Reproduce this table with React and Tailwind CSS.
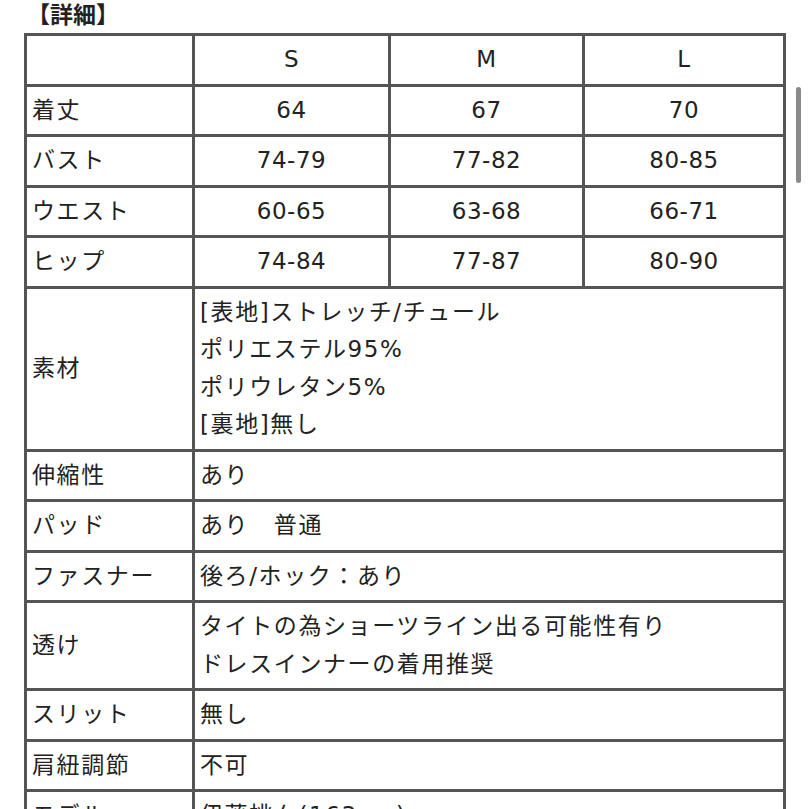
import React from 'react';

const sizes = [
  { label: '着丈', s: '64', m: '67', l: '70' },
  { label: 'バスト', s: '74-79', m: '77-82', l: '80-85' },
  { label: 'ウエスト', s: '60-65', m: '63-68', l: '66-71' },
  { label: 'ヒップ', s: '74-84', m: '77-87', l: '80-90' },
];

const details = [
  { label: '素材', lines: ['[表地]ストレッチ/チュール', 'ポリエステル95%', 'ポリウレタン5%', '[裏地]無し'] },
  { label: '伸縮性', lines: ['あり'] },
  { label: 'パッド', lines: ['あり　普通'] },
  { label: 'ファスナー', lines: ['後ろ/ホック：あり'] },
  { label: '透け', lines: ['タイトの為ショーツライン出る可能性有り', 'ドレスインナーの着用推奨'] },
  { label: 'スリット', lines: ['無し'] },
  { label: '肩紐調節', lines: ['不可'] },
  { label: 'モデル', lines: ['伊藤桃々(163cm)'] },
];

const cell = 'border-[3px] border-[#555] px-[5px] py-[5px] leading-[37.5px] align-middle';
const num = `${cell} text-center tracking-[0.5px]`;

export default function App() {
  return (
    <div
      className="relative h-[809px] w-[809px] overflow-hidden bg-white text-[#222] text-[23px] tracking-[1.6px]"
      style={{ fontFamily: '"DejaVu Sans", "Noto Sans CJK JP", sans-serif' }}
    >
      <div className="h-[33px] pl-[27px] text-[23px] font-bold leading-[30px] tracking-normal">【詳細】</div>

      <table className="ml-[24px] w-[762px] table-fixed border-collapse">
        <colgroup>
          <col className="w-[168px]" />
          <col className="w-[196px]" />
          <col className="w-[194px]" />
          <col className="w-[201px]" />
        </colgroup>
        <tbody>
          <tr>
            <td className={cell}></td>
            <td className={num}>S</td>
            <td className={num}>M</td>
            <td className={num}>L</td>
          </tr>
          {sizes.map((r) => (
            <tr key={r.label}>
              <td className={cell}>{r.label}</td>
              <td className={num}>{r.s}</td>
              <td className={num}>{r.m}</td>
              <td className={num}>{r.l}</td>
            </tr>
          ))}
          {details.map((r) => (
            <tr key={r.label}>
              <td className={cell}>{r.label}</td>
              <td className={cell} colSpan={3}>
                {r.lines.map((t) => (
                  <div key={t}>{t}</div>
                ))}
              </td>
            </tr>
          ))}
        </tbody>
      </table>

      {/* scrollbar thumb */}
      <div className="absolute left-[796px] top-[87px] h-[96px] w-[5px] rounded-full bg-[#8a8a8a]" />
    </div>
  );
}
